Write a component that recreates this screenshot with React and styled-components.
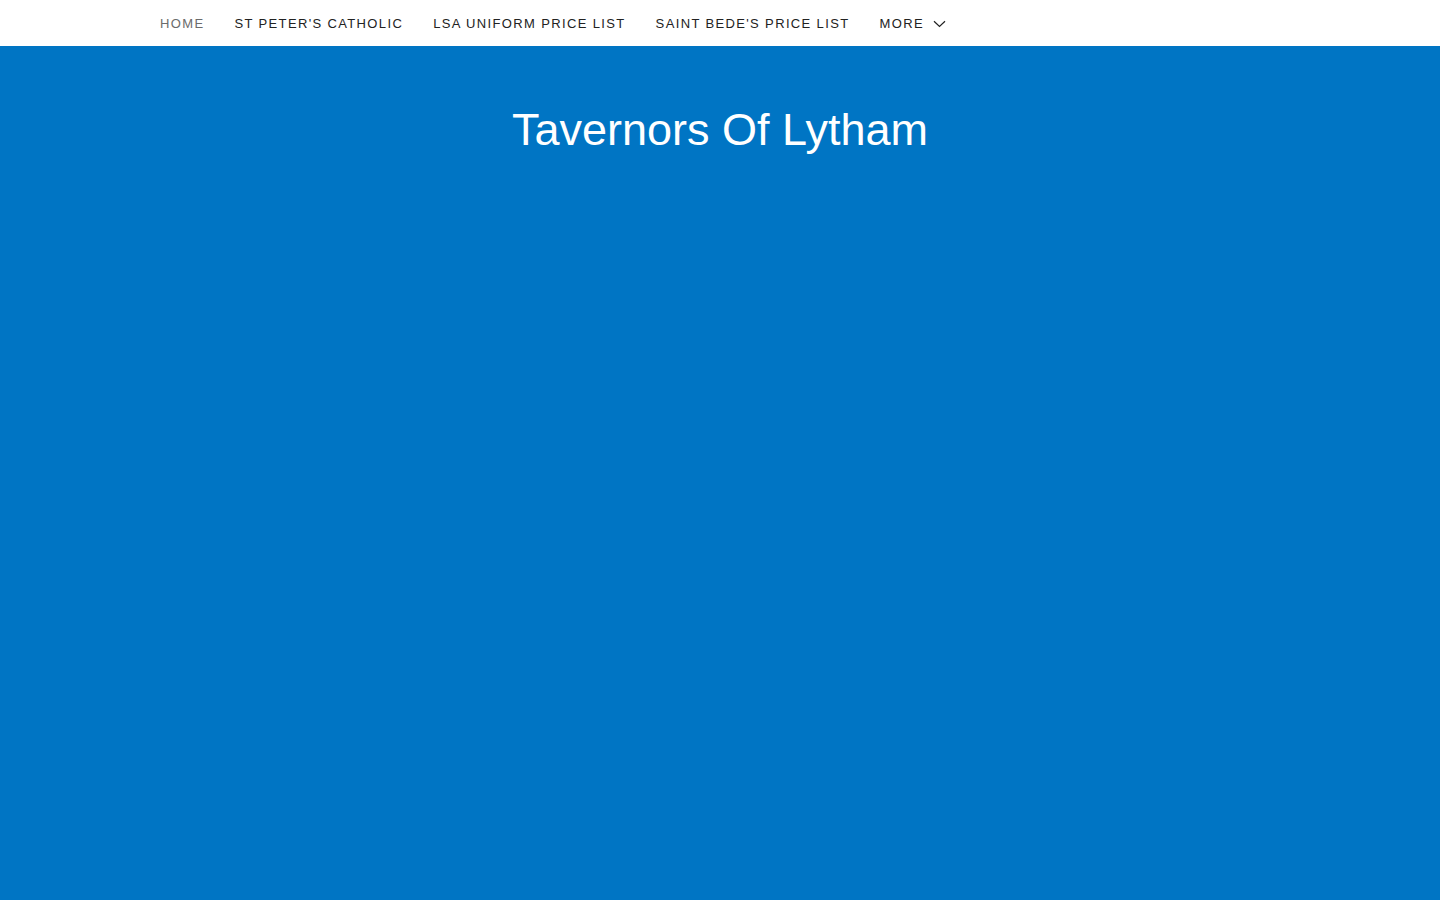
import React from 'react';
import styled, { createGlobalStyle } from 'styled-components';

const GlobalStyle = createGlobalStyle`
  html, body {
    margin: 0;
    padding: 0;
    height: 100%;
  }
  body {
    font-family: "Liberation Sans", Arial, sans-serif;
    background: #0075c4;
  }
  #root {
    min-height: 100vh;
  }
`;

const Page = styled.div`
  min-height: 100vh;
  display: flex;
  flex-direction: column;
  background: #0075c4;
`;

const NavBar = styled.nav`
  height: 46px;
  background: #ffffff;
  display: flex;
  align-items: center;
  padding-left: 145px;
`;

const NavItem = styled.a`
  display: flex;
  align-items: center;
  gap: 9px;
  padding: 0 15px;
  font-size: 13px;
  letter-spacing: 1.36px;
  text-transform: uppercase;
  color: ${p => (p.$active ? '#6b6b6b' : '#222222')};
  text-decoration: none;
  cursor: pointer;
  white-space: nowrap;
  line-height: 46px;
  padding-top: 1px;
`;

const Hero = styled.header`
  flex: 1;
  display: flex;
  justify-content: center;
  padding-top: 56px;
`;

const Title = styled.h1`
  margin: 0;
  font-size: 45px;
  font-weight: 400;
  color: #ffffff;
  line-height: 56px;
`;

const Chevron = () => (
  <svg width="13" height="8" viewBox="0 0 13 8" fill="none">
    <path d="M1 1.2L6.5 6.5L12 1.2" stroke="#222" strokeWidth="1.2" />
  </svg>
);

const links = [
  'Home',
  "St Peter's Catholic",
  'LSA Uniform Price List',
  "Saint Bede's Price List",
];

export default function App() {
  return (
    <Page>
      <GlobalStyle />
      <NavBar>
        {links.map((l, i) => (
          <NavItem key={l} $active={i === 0}>{l}</NavItem>
        ))}
        <NavItem>
          More
          <Chevron />
        </NavItem>
      </NavBar>
      <Hero>
        <Title>Tavernors Of Lytham</Title>
      </Hero>
    </Page>
  );
}
